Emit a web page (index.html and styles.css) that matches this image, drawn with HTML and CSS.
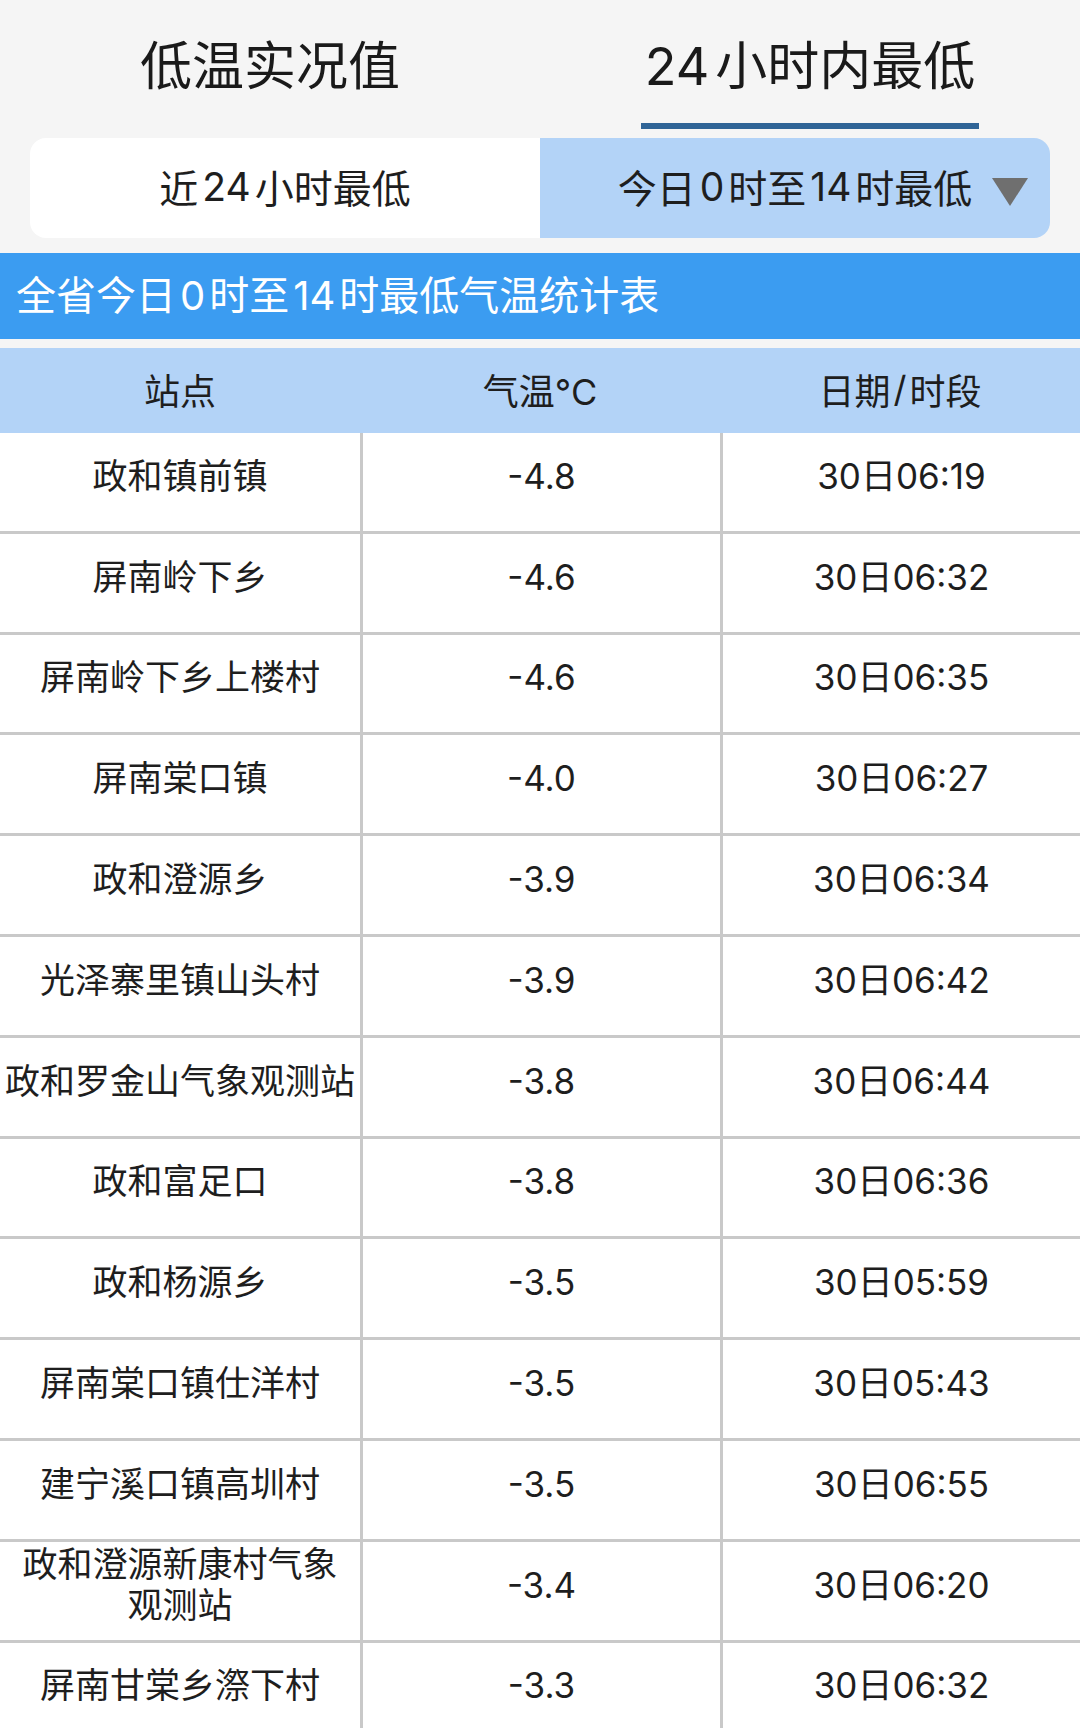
FILE: index.html
```html
<!DOCTYPE html>
<html lang="zh-CN">
<head>
<meta charset="utf-8">
<title>全省今日0时至14时最低气温统计表</title>
<link rel="stylesheet" href="styles.css">
</head>
<body>
<div class="page">
  <nav class="tabs">
    <div class="tab"><span class="tab-label">低温实况值</span></div>
    <div class="tab tab-active"><span class="tab-label"><span class="n">24</span>小时内最低</span><span class="tab-bar"></span></div>
  </nav>
  <div class="segment">
    <div class="seg-item">近<span class="n">24</span>小时最低</div>
    <div class="seg-item seg-active">今日<span class="n">0</span>时至<span class="n">14</span>时最低
      <svg class="caret" width="36" height="28" viewBox="0 0 36 28"><polygon points="0,0 36,0 18,28" fill="#6f6f6f"/></svg>
    </div>
  </div>
  <div class="title-bar">全省今日<span class="n">0</span>时至<span class="n">14</span>时最低气温统计表</div>
  <div class="table">
    <div class="thead">
      <div class="th">站点</div>
      <div class="th">气温°C</div>
      <div class="th">日期<span class="slash">/</span>时段</div>
    </div>
    <div class="row"><div class="td">政和镇前镇</div><div class="td">-4.8</div><div class="td">30日06:19</div></div>
    <div class="row"><div class="td">屏南岭下乡</div><div class="td">-4.6</div><div class="td">30日06:32</div></div>
    <div class="row"><div class="td">屏南岭下乡上楼村</div><div class="td">-4.6</div><div class="td">30日06:35</div></div>
    <div class="row"><div class="td">屏南棠口镇</div><div class="td">-4.0</div><div class="td">30日06:27</div></div>
    <div class="row"><div class="td">政和澄源乡</div><div class="td">-3.9</div><div class="td">30日06:34</div></div>
    <div class="row"><div class="td">光泽寨里镇山头村</div><div class="td">-3.9</div><div class="td">30日06:42</div></div>
    <div class="row"><div class="td">政和罗金山气象观测站</div><div class="td">-3.8</div><div class="td">30日06:44</div></div>
    <div class="row"><div class="td">政和富足口</div><div class="td">-3.8</div><div class="td">30日06:36</div></div>
    <div class="row"><div class="td">政和杨源乡</div><div class="td">-3.5</div><div class="td">30日05:59</div></div>
    <div class="row"><div class="td">屏南棠口镇仕洋村</div><div class="td">-3.5</div><div class="td">30日05:43</div></div>
    <div class="row"><div class="td">建宁溪口镇高圳村</div><div class="td">-3.5</div><div class="td">30日06:55</div></div>
    <div class="row"><div class="td">政和澄源新康村气象<br>观测站</div><div class="td">-3.4</div><div class="td">30日06:20</div></div>
    <div class="row"><div class="td">屏南甘棠乡漈下村</div><div class="td">-3.3</div><div class="td">30日06:32</div></div>
  </div>
</div>
</body>
</html>
```

FILE: styles.css
```css
* { box-sizing: border-box; }
html, body {
  margin: 0;
  padding: 0;
  background: #f5f5f5;
  font-family: Inter, "Noto Sans CJK SC", "Noto Sans", sans-serif;
  color: #1e1e1e;
}
.page {
  width: 1080px;
  height: 1728px;
  overflow: hidden;
}
.n {
  margin: 0 4px;
}
.tabs {
  display: grid;
  grid-template-columns: 1fr 1fr;
  height: 129px;
}
.tab {
  display: flex;
  flex-direction: column;
  align-items: center;
  padding-top: 36px;
}
.tab-label {
  font-size: 52px;
  line-height: 62px;
  color: #1a1a1a;
}
.tab-label .n {
  margin: 0 6px 0 0;
}
.tab-bar {
  display: block;
  width: 338px;
  height: 6px;
  margin-top: 25px;
  background: #2f6496;
}
.segment {
  display: grid;
  grid-template-columns: 1fr 1fr;
  margin: 9px 30px 0;
  height: 100px;
  border-radius: 16px;
  overflow: hidden;
}
.seg-item {
  display: flex;
  align-items: center;
  justify-content: center;
  font-size: 39px;
  padding-bottom: 4px;
  background: #ffffff;
  color: #1e1e1e;
}
.seg-active {
  position: relative;
  background: #b3d3f7;
}
.caret {
  position: absolute;
  right: 22px;
  top: 40px;
}
.title-bar {
  margin-top: 15px;
  height: 86px;
  background: #3b9cf1;
  color: #ffffff;
  font-size: 40px;
  line-height: 85px;
  padding-left: 16px;
}
.table {
  margin-top: 9px;
  background: #ffffff;
}
.thead {
  display: grid;
  grid-template-columns: repeat(3, 1fr);
  height: 85px;
  background: #b3d3f7;
}
.th {
  display: flex;
  align-items: center;
  justify-content: center;
  font-size: 36px;
  padding-bottom: 4px;
  color: #1e1e1e;
}
.slash {
  margin: 0 3px;
}
.row {
  display: grid;
  grid-template-columns: repeat(3, 1fr);
  height: 100.8px;
  border-bottom: 3px solid #c9c9c9;
}
.td {
  display: flex;
  align-items: center;
  justify-content: center;
  text-align: center;
  font-size: 35px;
  line-height: 41px;
  padding-bottom: 11px;
  white-space: nowrap;
}
.td + .td {
  border-left: 3px solid #c9c9c9;
}
```
